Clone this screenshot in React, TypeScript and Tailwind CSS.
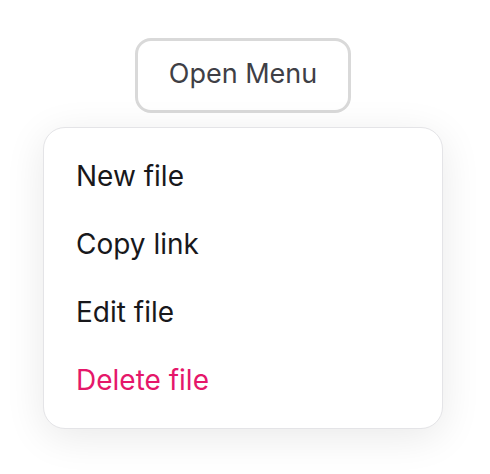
import { useState } from "react";

const ITEMS = [
  { label: "New file", danger: false },
  { label: "Copy link", danger: false },
  { label: "Edit file", danger: false },
  { label: "Delete file", danger: true },
] as const;

export default function App() {
  const [open, setOpen] = useState(true);

  return (
    <div
      className="min-h-screen bg-white flex flex-col items-center pt-[38px] pr-[4px]"
      style={{ fontFamily: "Inter, 'Noto Sans', sans-serif" }}
    >
      <button
        type="button"
        onClick={() => setOpen((o) => !o)}
        className="w-[216px] h-[75px] rounded-[16px] border-[3px] border-[#d9d9d9] bg-white text-[27px] text-[#3f3f46] pb-[2px]"
      >
        Open Menu
      </button>

      {open && (
        <div
          role="menu"
          className="relative z-10 mt-[14px] w-[400px] rounded-[22px] border border-[#e4e4e7] bg-white py-[14px] shadow-[0_8px_40px_rgba(0,0,0,0.09)]"
        >
          {ITEMS.map((item) => (
            <button
              key={item.label}
              type="button"
              role="menuitem"
              className={`flex items-center w-full h-[68px] px-[32px] text-[28px] text-left ${
                item.danger ? "text-[#e5176a]" : "text-[#18181b]"
              }`}
            >
              {item.label}
            </button>
          ))}
        </div>
      )}
    </div>
  );
}
